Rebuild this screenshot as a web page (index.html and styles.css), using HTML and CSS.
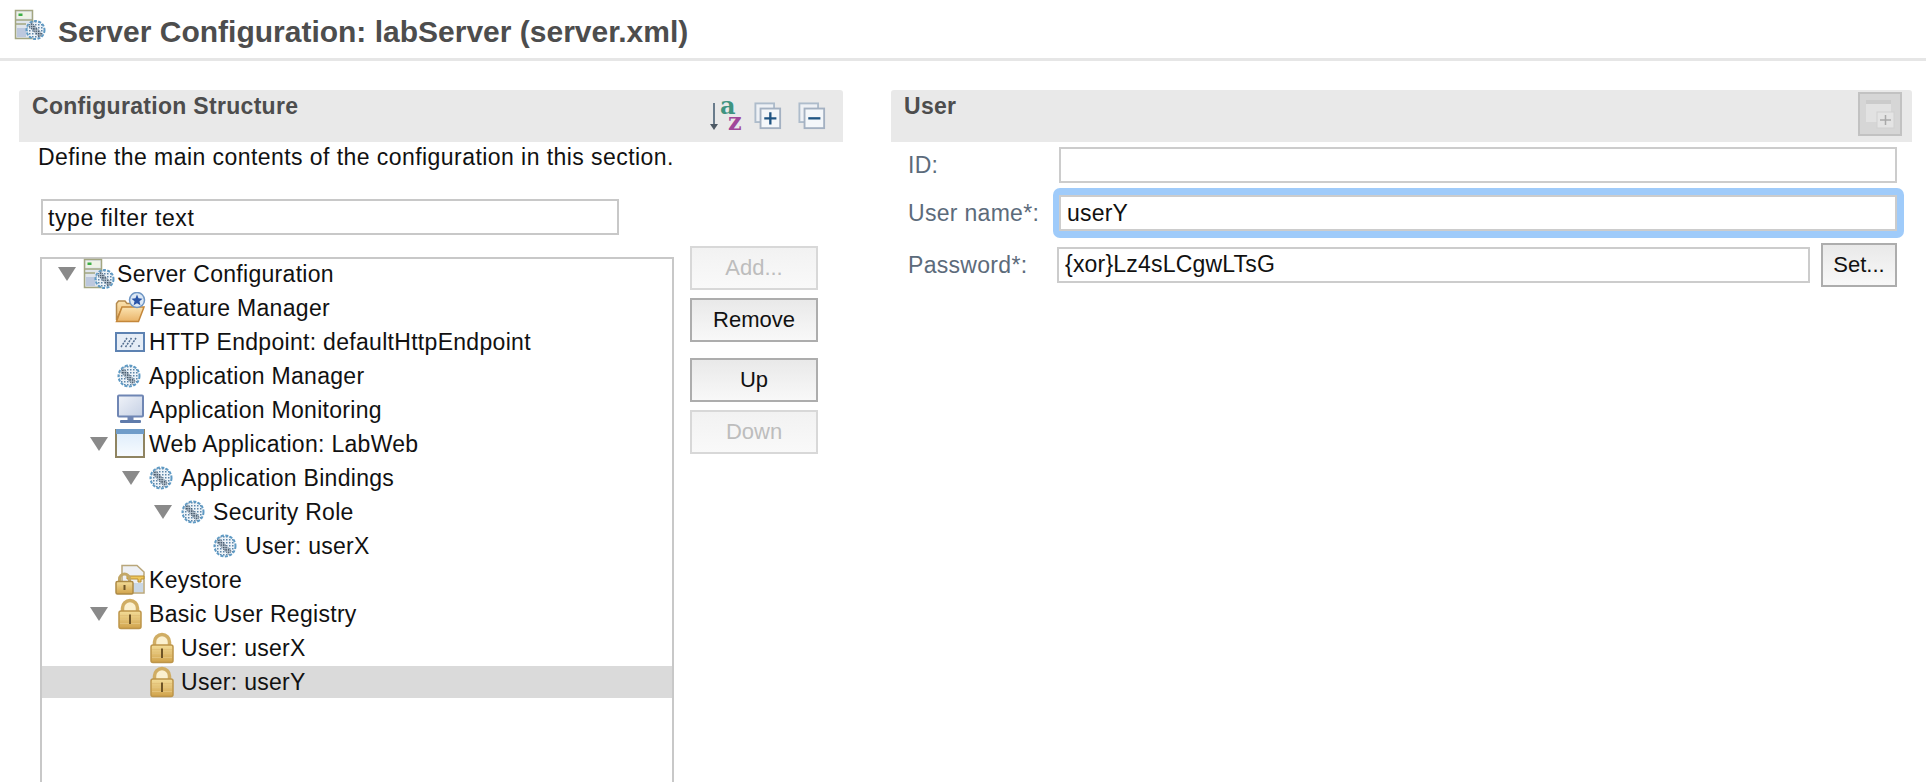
FILE: index.html
```html
<!DOCTYPE html>
<html lang="en">
<head>
    <meta charset="UTF-8">
    <title>Server Configuration: labServer (server.xml)</title>
    <link rel="stylesheet" href="styles.css">
</head>
<body>
    <svg class="defs" width="0" height="0">
        <defs>
            <pattern id="dither" width="3" height="3" patternUnits="userSpaceOnUse">
                <rect width="3" height="3" fill="#edf3f8"/>
                <rect width="1.500" height="1.500" fill="#5d86a8"/>
            </pattern>
            <pattern id="ditherDark" width="2.400" height="2.400" patternUnits="userSpaceOnUse">
                <rect width="2.400" height="2.400" fill="#b9c6d2"/>
                <rect width="1.400" height="1.400" fill="#33465a"/>
            </pattern>
            <linearGradient id="gold" x1="0" y1="0" x2="0" y2="1">
                <stop offset="0" stop-color="#f3dc98"/>
                <stop offset="1" stop-color="#d0a24a"/>
            </linearGradient>
            <linearGradient id="folder" x1="0" y1="0" x2="0" y2="1">
                <stop offset="0" stop-color="#fbe3b0"/>
                <stop offset="1" stop-color="#e9b368"/>
            </linearGradient>
            <linearGradient id="screen" x1="0" y1="0" x2="1" y2="1">
                <stop offset="0" stop-color="#f0f3f9"/>
                <stop offset="1" stop-color="#c5d0e4"/>
            </linearGradient>
            <linearGradient id="pane" x1="0" y1="0" x2="0" y2="1">
                <stop offset="0" stop-color="#dcecfb"/>
                <stop offset="1" stop-color="#f8fbfe"/>
            </linearGradient>
            <symbol id="globe" viewBox="0 0 32 32">
                <circle cx="14" cy="16" r="10.500" fill="url(#dither)" stroke="#5f9ac4" stroke-width="2" stroke-dasharray="3 1.500"/>
                <path d="M7 10 19 23" stroke="url(#ditherDark)" stroke-width="5" fill="none"/>
            </symbol>
            <symbol id="server" viewBox="0 0 32 32">
                <rect x="1.500" y="1.500" width="17" height="28" fill="#dfe5ec" stroke="#a3a681" stroke-width="1.500"/>
                <rect x="3" y="3" width="14" height="6.500" fill="#eef2e6"/>
                <rect x="4.500" y="4.500" width="4" height="2.500" fill="#3cae45"/>
                <path d="M2 11H18M2 15H12" stroke="#a3a681" stroke-width="1.500"/>
                <rect x="3" y="19" width="9" height="9" fill="#bcc8de"/>
                <circle cx="21.500" cy="21" r="9" fill="url(#dither)" stroke="#5f9ac4" stroke-width="2" stroke-dasharray="3 1.500"/>
                <path d="M16 15 27 27" stroke="url(#ditherDark)" stroke-width="5" fill="none"/>
            </symbol>
            <symbol id="manager" viewBox="0 0 32 32">
                <path d="M1.500 28V11.500L3.500 9H10L12 11.500H20V16H7L1.500 28Z" fill="url(#folder)" stroke="#b58a4d" stroke-width="1.500"/>
                <path d="M7 15H29L23.500 29.500H1.500Z" fill="url(#folder)" stroke="#c4873a" stroke-width="1.500"/>
                <circle cx="22" cy="8" r="7.500" fill="#dce8f5" stroke="#6f96c4" stroke-width="1.500"/>
                <path d="M22 2.500 23.500 6.300 27.500 6.700 24.500 9.300 25.400 13.300 22 11.200 18.600 13.300 19.500 9.300 16.500 6.700 20.500 6.300Z" fill="#2a55a8"/>
            </symbol>
            <symbol id="endpoint" viewBox="0 0 32 32">
                <rect x="1" y="7" width="28" height="18" fill="#e6edf6" stroke="#5d82b2" stroke-width="2"/>
                <path d="M6 21 12 12M10.500 21 16.500 12M15 21 21 12" stroke="#526d8f" stroke-width="1.500" stroke-dasharray="2 1"/>
                <path d="M23 20H25" stroke="#526d8f" stroke-width="1.500"/>
            </symbol>
            <symbol id="monitor" viewBox="0 0 32 32">
                <rect x="3" y="1.500" width="25" height="21" rx="1" fill="url(#screen)" stroke="#6f86b4" stroke-width="2"/>
                <rect x="12.500" y="23" width="6" height="3" fill="#6f86b4"/>
                <rect x="5" y="26" width="21" height="3" rx="1" fill="#5f7bab"/>
            </symbol>
            <symbol id="window" viewBox="0 0 32 32">
                <rect x="1" y="2" width="28" height="27" fill="url(#pane)" stroke="#8f8461" stroke-width="2"/>
                <rect x="1" y="1" width="28" height="5" fill="#6f9cc9"/>
            </symbol>
            <symbol id="keystore" viewBox="0 0 32 32">
                <path d="M7 1.500H22L29 8V29H13V24H7Z" fill="#eef0f4" stroke="#b9a67a" stroke-width="1.500"/>
                <rect x="18" y="19" width="10" height="9" fill="#c9d7e6"/>
                <path d="M12 12H29V15H26V18H23V15H12Z" fill="#eec65a" stroke="#b98e33" stroke-width="1"/>
                <path d="M4.500 18V15A5 5 0 0 1 14.500 15V18" fill="none" stroke="#c2a767" stroke-width="3"/>
                <rect x="1" y="17.500" width="17" height="12.500" rx="1.500" fill="url(#gold)" stroke="#ad8a45" stroke-width="1.500"/>
                <rect x="8.500" y="21" width="2" height="5" fill="#6e5426"/>
            </symbol>
            <symbol id="lock" viewBox="0 0 32 32">
                <path d="M7.500 14V10A7.500 7.500 0 0 1 22.500 10V14" fill="#fbf0cf" stroke="#d0ad64" stroke-width="3.500"/>
                <rect x="4" y="13" width="22" height="17.500" rx="2" fill="url(#gold)" stroke="#bd954a" stroke-width="1.500"/>
                <path d="M5 17.500H25M5 21.500H25M5 25.500H25" stroke="#e3c27a" stroke-width="1.200"/>
                <path d="M14 16.500H16V26H14Z" fill="#6e5426"/>
            </symbol>
        </defs>
    </svg>

    <header class="page-title">
        <svg class="title-icon"><use href="#server"/></svg>
        <h1>Server Configuration: labServer (server.xml)</h1>
    </header>

    <main class="columns">
        <section class="structure">
            <div class="section-head">
                <h2>Configuration Structure</h2>
                <div class="head-tools">
                    <svg class="tool-sort" viewBox="0 0 32 34">
                        <path d="M5 5V28" stroke="#6a7c8c" stroke-width="2"/>
                        <path d="M1 26H9L5 32Z" fill="#4d5964"/>
                        <text class="sort-a" x="11" y="16">a</text>
                        <text class="sort-z" x="19" y="32">z</text>
                    </svg>
                    <svg class="tool" viewBox="0 0 30 30">
                        <rect x="1.500" y="1.500" width="20" height="20" fill="#eef1f5" stroke="#aebccb" stroke-width="2"/>
                        <rect x="7" y="7" width="21" height="21" fill="#f4f7fa" stroke="#a4b1c2" stroke-width="2"/>
                        <path d="M11 17.500H24M17.500 11V24" stroke="#1f5482" stroke-width="2.500"/>
                    </svg>
                    <svg class="tool" viewBox="0 0 30 30">
                        <rect x="1.500" y="1.500" width="20" height="20" fill="#eef1f5" stroke="#aebccb" stroke-width="2"/>
                        <rect x="7" y="7" width="21" height="21" fill="#f4f7fa" stroke="#a4b1c2" stroke-width="2"/>
                        <path d="M11 17.500H24" stroke="#1f5482" stroke-width="2.500"/>
                    </svg>
                </div>
            </div>
            <p class="section-desc">Define the main contents of the configuration in this section.</p>
            <input class="filter" type="text" value="type filter text">
            <div class="tree-area">
                <ul class="tree">
                    <li class="row"><span class="arrow"></span><svg class="icon"><use href="#server"/></svg>Server Configuration</li>
                    <li class="row lvl1"><svg class="icon"><use href="#manager"/></svg>Feature Manager</li>
                    <li class="row lvl1"><svg class="icon"><use href="#endpoint"/></svg>HTTP Endpoint: defaultHttpEndpoint</li>
                    <li class="row lvl1"><svg class="icon"><use href="#globe"/></svg>Application Manager</li>
                    <li class="row lvl1"><svg class="icon"><use href="#monitor"/></svg>Application Monitoring</li>
                    <li class="row lvl1"><span class="arrow"></span><svg class="icon"><use href="#window"/></svg>Web Application: LabWeb</li>
                    <li class="row lvl2"><span class="arrow"></span><svg class="icon"><use href="#globe"/></svg>Application Bindings</li>
                    <li class="row lvl3"><span class="arrow"></span><svg class="icon"><use href="#globe"/></svg>Security Role</li>
                    <li class="row lvl4"><svg class="icon"><use href="#globe"/></svg>User: userX</li>
                    <li class="row lvl1"><svg class="icon"><use href="#keystore"/></svg>Keystore</li>
                    <li class="row lvl1"><span class="arrow"></span><svg class="icon"><use href="#lock"/></svg>Basic User Registry</li>
                    <li class="row lvl2"><svg class="icon"><use href="#lock"/></svg>User: userX</li>
                    <li class="row lvl2 selected"><svg class="icon"><use href="#lock"/></svg>User: userY</li>
                </ul>
                <div class="tree-buttons">
                    <button class="btn" disabled>Add...</button>
                    <button class="btn">Remove</button>
                    <button class="btn btn-gap">Up</button>
                    <button class="btn" disabled>Down</button>
                </div>
            </div>
        </section>

        <section class="details">
            <div class="section-head">
                <h2>User</h2>
                <button class="add-window">
                    <svg viewBox="0 0 30 30" width="30" height="30">
                        <rect x="1" y="1" width="25" height="22" fill="#e2e2e2"/>
                        <rect x="1" y="1" width="25" height="4" fill="#cbcbcb"/>
                        <rect x="12" y="13" width="17" height="16" fill="#e4e4e4" stroke="#d0d0d0"/>
                        <path d="M20.500 16V26M15 21H26" stroke="#a9a9a9" stroke-width="1.500"/>
                    </svg>
                </button>
            </div>
            <div class="form">
                <label class="field-label" for="uid">ID:</label>
                <input class="field" id="uid" type="text">
                <label class="field-label" for="uname">User name*:</label>
                <div class="focus-ring"><input class="field" id="uname" type="text" value="userY"></div>
                <label class="field-label" for="pw">Password*:</label>
                <div class="pw-line">
                    <input class="field" id="pw" type="text" value="{xor}Lz4sLCgwLTsG">
                    <button class="btn btn-set">Set...</button>
                </div>
            </div>
        </section>
    </main>
</body>
</html>
```

FILE: styles.css
```css
html, body {
    height: 100%;
}
body {
    margin: 0;
    background: #fff;
    font-family: "Liberation Sans", Arial, sans-serif;
    font-size: 23px;
    letter-spacing: 0.3px;
    color: #111;
    overflow: hidden;
}
.defs {
    display: block;
}
.page-title {
    display: flex;
    align-items: center;
    gap: 12px;
    height: 58px;
    padding-left: 14px;
    border-bottom: 3px solid #e6e6e6;
}
.title-icon {
    width: 32px;
    height: 32px;
    margin-top: -8px;
}
h1 {
    margin: 5px 0 0;
    font-size: 30px;
    font-weight: bold;
    letter-spacing: 0;
    color: #4d4d4d;
}
.columns {
    display: grid;
    grid-template-columns: 824px 1021px;
    column-gap: 48px;
    padding: 29px 0 0 19px;
}
.section-head {
    display: flex;
    justify-content: space-between;
    height: 52px;
    background: #e9e9e9;
    border-radius: 3px 3px 0 0;
}
h2 {
    margin: 0;
    padding: 4px 0 0 13px;
    font-size: 23px;
    line-height: 24px;
    font-weight: bold;
    letter-spacing: 0.3px;
    color: #4d4d4d;
}
.head-tools {
    display: flex;
    gap: 16px;
    padding: 12px 17px 0 0;
}
.tool {
    width: 28px;
    height: 28px;
}
.tool-sort {
    width: 32px;
    height: 34px;
    margin: -4px -3px 0 0;
    overflow: visible;
}
.sort-a, .sort-z {
    font-family: "DejaVu Serif", serif;
    font-weight: bold;
    font-size: 24px;
}
.sort-a {
    fill: #3f9480;
}
.sort-z {
    fill: #a0479a;
}
.section-desc {
    margin: 3px 0 0 19px;
    line-height: 24px;
    letter-spacing: 0.44px;
}
.filter {
    display: block;
    box-sizing: border-box;
    width: 578px;
    height: 36px;
    margin: 30px 0 0 22px;
    padding: 3px 5px 0;
    border: 2px solid #c8c8c8;
    font: 23px "Liberation Sans", Arial, sans-serif;
    letter-spacing: 0.6px;
    color: #111;
    outline: none;
}
.tree-area {
    display: flex;
    align-items: flex-start;
    margin: 11px 0 0 21px;
    gap: 16px;
}
.tree {
    box-sizing: border-box;
    width: 634px;
    height: 525px;
    margin: 11px 0 0;
    padding: 0;
    list-style: none;
    border: 2px solid #c8c8c8;
    border-bottom: 0;
}
.row {
    display: flex;
    align-items: center;
    height: 34px;
    padding-left: 41px;
    white-space: nowrap;
}
.row:first-child {
    margin-top: -2px;
}
.lvl1 { padding-left: 73px; }
.lvl2 { padding-left: 105px; }
.lvl3 { padding-left: 137px; }
.lvl4 { padding-left: 169px; }
.selected {
    height: 32px;
    margin: 1px 0;
    background: #dadada;
}
.arrow {
    position: absolute;
    margin-left: -25px;
    width: 0;
    height: 0;
    border-left: 9px solid transparent;
    border-right: 9px solid transparent;
    border-top: 14px solid #8a8a8a;
}
.icon {
    width: 32px;
    height: 32px;
    flex: none;
    margin-right: 2px;
}
.tree-buttons {
    display: flex;
    flex-direction: column;
    gap: 8px;
    width: 128px;
}
.btn {
    box-sizing: border-box;
    height: 44px;
    padding: 0;
    border: 2px solid #adadad;
    background: linear-gradient(#e9e9e9, #f8f8f8);
    font: 22px "Liberation Sans", Arial, sans-serif;
    color: #111;
}
.btn:disabled {
    border-color: #d8d8d8;
    background: linear-gradient(#f2f2f2, #f9f9f9);
    color: #bdbdbd;
}
.btn-gap {
    margin-top: 8px;
}
.add-window {
    box-sizing: border-box;
    display: flex;
    align-items: center;
    justify-content: center;
    width: 44px;
    height: 44px;
    margin: 2px 10px 0 0;
    padding: 0;
    border: 2px solid #c2c2c2;
    background: #d6d6d6;
}
.form {
    display: grid;
    grid-template-columns: 168px 838px;
    grid-template-rows: 36px 50px 44px;
    row-gap: 5px;
    align-items: center;
    padding-top: 5px;
}
.field-label {
    padding-left: 17px;
    color: #5c6b7b;
}
.field {
    box-sizing: border-box;
    display: block;
    width: 100%;
    height: 36px;
    padding: 0 6px;
    border: 2px solid #cccccc;
    font: 23px "Liberation Sans", Arial, sans-serif;
    letter-spacing: 0.2px;
    color: #111;
    outline: none;
}
.focus-ring {
    margin: 0 -7px 0 -6px;
    padding: 7px 7px 7px 6px;
    background: #9fcbfa;
    border-radius: 7px;
}
.pw-line {
    display: flex;
    align-items: center;
    gap: 11px;
    margin: -1px 0 0 -2px;
}
.pw-line .field {
    width: 754px;
}
.btn-set {
    width: 76px;
    flex: none;
}
```
